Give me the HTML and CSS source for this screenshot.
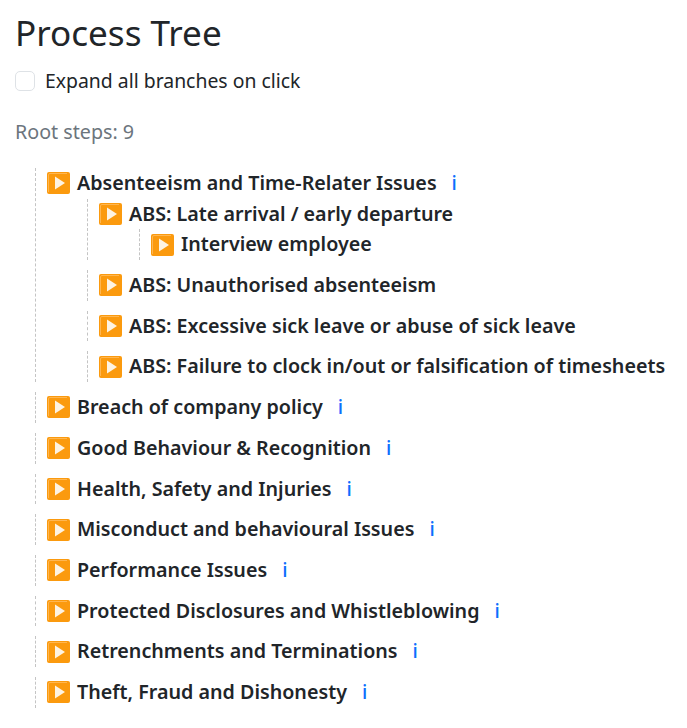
FILE: index.html
```html
<!DOCTYPE html>
<html lang="en">

<head>
    <meta charset="UTF-8">
    <meta name="viewport" content="width=device-width, initial-scale=1.0">
    <title>Process Tree</title>
    <link rel="stylesheet" href="styles.css">
</head>

<body>
    <svg class="icon-defs" width="0" height="0">
        <symbol id="play" viewBox="0 0 23 22">
            <rect x="0" y="0" width="23" height="22" rx="2" fill="#fb9a0e"/>
            <path d="M1.5 20V3q0-1.500 1.500-1.500h17" fill="none" stroke="#ffb650" stroke-width="1"/>
            <path d="M8 4.500 18 11 8 17.500z" fill="#fdf3e3"/>
        </symbol>
    </svg>
    <h1>Process Tree</h1>
    <label class="expand-all">
        <input type="checkbox">
        <span>Expand all branches on click</span>
    </label>
    <p class="root-count">Root steps: 9</p>
    <ul class="tree">
        <li>
            <div class="step"><svg class="play"><use href="#play"/></svg>Absenteeism and Time-Relater Issues <a class="info" href="#">i</a></div>
            <ul>
                <li>
                    <div class="step"><svg class="play"><use href="#play"/></svg>ABS: Late arrival / early departure</div>
                    <ul>
                        <li>
                            <div class="step"><svg class="play"><use href="#play"/></svg>Interview employee</div>
                        </li>
                    </ul>
                </li>
                <li>
                    <div class="step"><svg class="play"><use href="#play"/></svg>ABS: Unauthorised absenteeism</div>
                </li>
                <li>
                    <div class="step"><svg class="play"><use href="#play"/></svg>ABS: Excessive sick leave or abuse of sick leave</div>
                </li>
                <li>
                    <div class="step"><svg class="play"><use href="#play"/></svg>ABS: Failure to clock in/out or falsification of timesheets</div>
                </li>
            </ul>
        </li>
        <li>
            <div class="step"><svg class="play"><use href="#play"/></svg>Breach of company policy <a class="info" href="#">i</a></div>
        </li>
        <li>
            <div class="step"><svg class="play"><use href="#play"/></svg>Good Behaviour &amp; Recognition <a class="info" href="#">i</a></div>
        </li>
        <li>
            <div class="step"><svg class="play"><use href="#play"/></svg>Health, Safety and Injuries <a class="info" href="#">i</a></div>
        </li>
        <li>
            <div class="step"><svg class="play"><use href="#play"/></svg>Misconduct and behavioural Issues <a class="info" href="#">i</a></div>
        </li>
        <li>
            <div class="step"><svg class="play"><use href="#play"/></svg>Performance Issues <a class="info" href="#">i</a></div>
        </li>
        <li>
            <div class="step"><svg class="play"><use href="#play"/></svg>Protected Disclosures and Whistleblowing <a class="info" href="#">i</a></div>
        </li>
        <li>
            <div class="step"><svg class="play"><use href="#play"/></svg>Retrenchments and Terminations <a class="info" href="#">i</a></div>
        </li>
        <li>
            <div class="step"><svg class="play"><use href="#play"/></svg>Theft, Fraud and Dishonesty <a class="info" href="#">i</a></div>
        </li>
    </ul>
</body>

</html>
```

FILE: styles.css
```css
body {
    font-family: "Noto Sans", "Open Sans", sans-serif;
    font-size: 19.7px;
    line-height: 30.7px;
    color: #212529;
    background-color: #fff;
    margin: 0;
    padding: 10px 15px 0;
    overflow: hidden;
}

.icon-defs {
    position: absolute;
}

h1 {
    font-size: 35.1px;
    font-weight: 400;
    line-height: 44px;
    margin: 0 0 12px;
}

.expand-all {
    display: flex;
    align-items: center;
    gap: 10px;
    font-size: 19.4px;
}

.expand-all input {
    appearance: none;
    width: 20px;
    height: 20px;
    margin: 0;
    border: 1px solid #dee2e6;
    border-radius: 5px;
    background-color: #fff;
}

.root-count {
    color: #6c757d;
    margin: 20px 0 20.500px;
}

.tree,
.tree ul {
    list-style-type: none;
    margin: 0;
    padding: 0 0 0 20px;
}

.tree ul {
    padding-left: 40px;
}

.tree li {
    border-left: 1px dashed #c4c4c4;
    padding-left: 11px;
}

.tree li + li {
    margin-top: 10px;
}

.step {
    display: flex;
    align-items: center;
    font-weight: 600;
    white-space: nowrap;
}

.play {
    width: 23px;
    height: 22px;
    margin-right: 7px;
    flex: none;
}

.info {
    color: #0d6efd;
    font-weight: 500;
    text-decoration: none;
    margin-left: 15px;
}
```
